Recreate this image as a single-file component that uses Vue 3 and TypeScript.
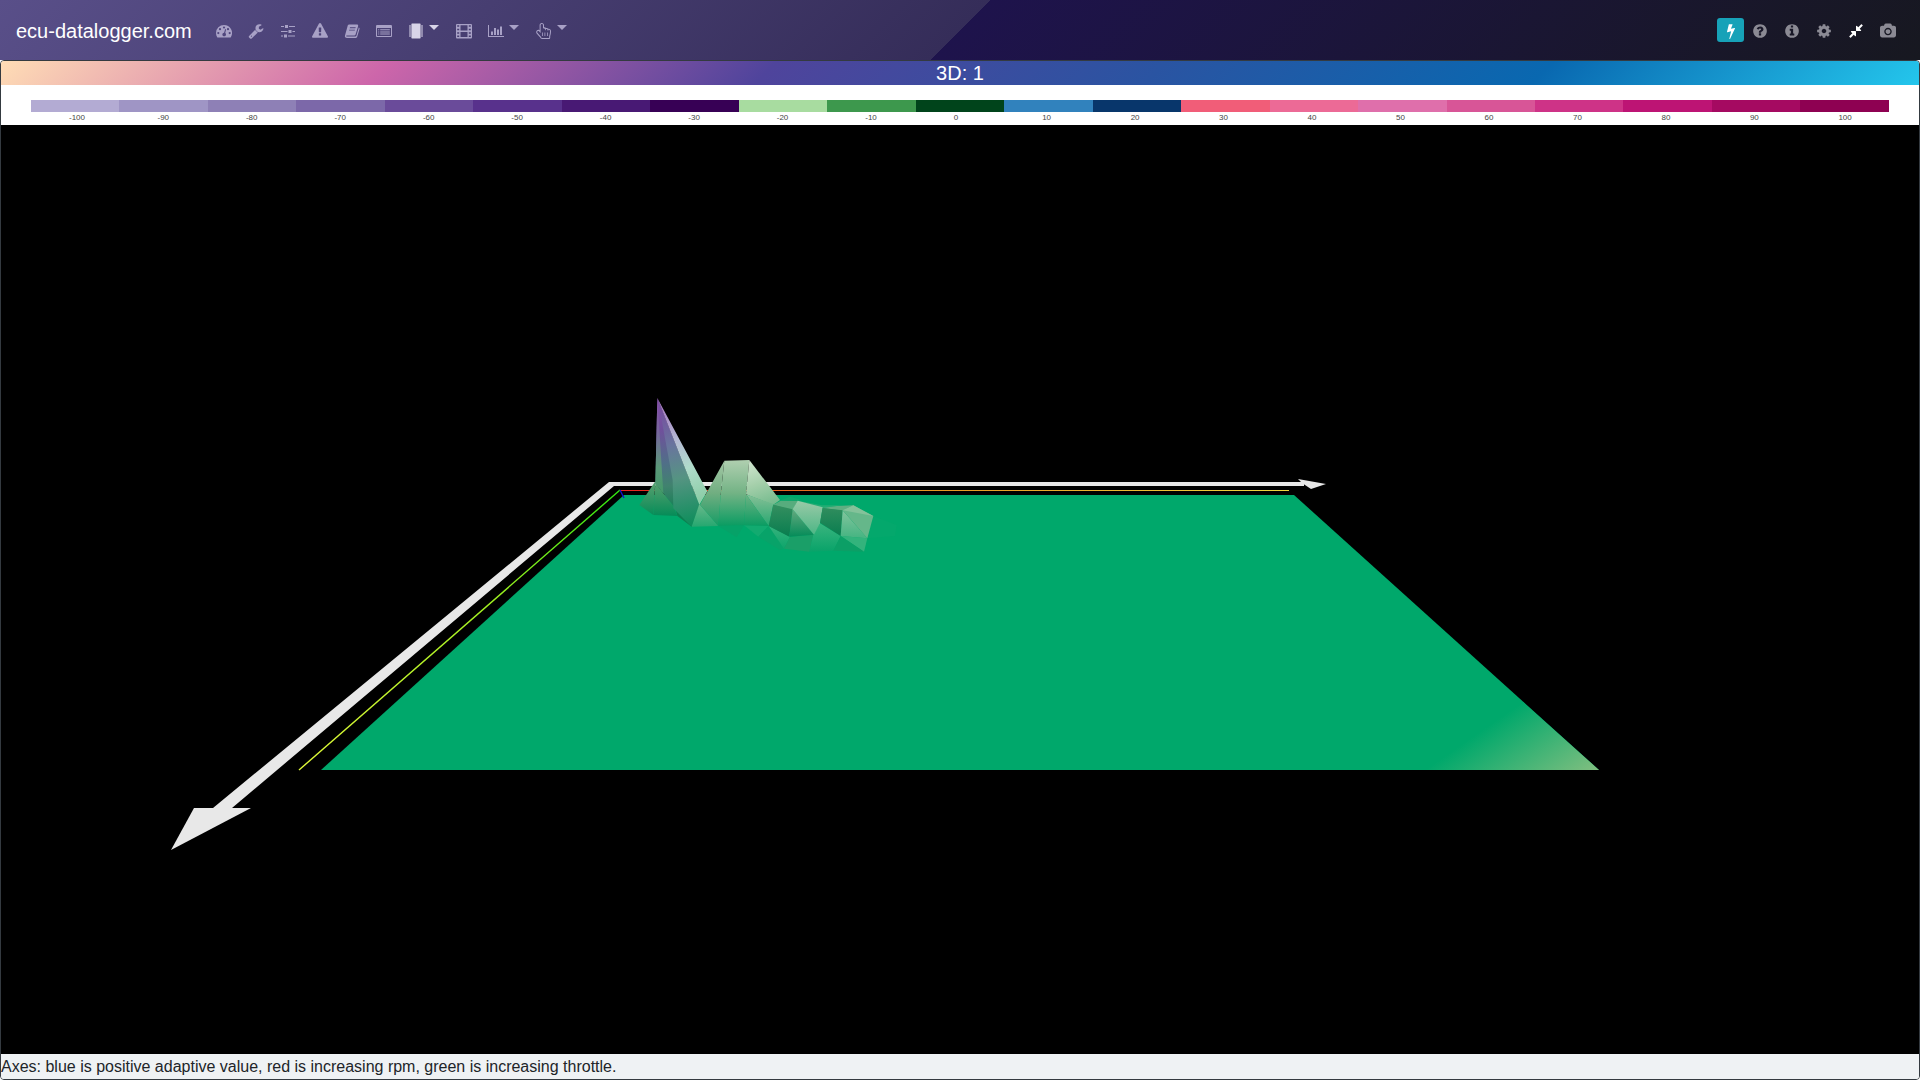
<script setup lang="ts">
interface Icon {
  label: string
  box?: string
  path: string
  caret?: boolean
  active?: boolean
}

const tools: Icon[] = [
  {
    label: 'Gauges',
    box: '0 0 16 16',
    path: 'M8 2a8 8 0 0 0-8 8c0 1.600.4 3 1.200 4.200.2.300.4.400.7.400h12.200c.3 0 .5-.1.7-.4A8 8 0 0 0 8 2zM2.300 9a1.100 1.100 0 1 1 0 2.200 1.100 1.100 0 0 1 0-2.200zM4 5.100a1.100 1.100 0 1 1 0 2.200 1.100 1.100 0 0 1 0-2.200zM8 3.400a1.100 1.100 0 1 1 0 2.200 1.100 1.100 0 0 1 0-2.200zM12 5.100a1.100 1.100 0 1 1 0 2.200 1.100 1.100 0 0 1 0-2.200zM13.700 9a1.100 1.100 0 1 1 0 2.200 1.100 1.100 0 0 1 0-2.200zM9.200 6.100l.9.300-.9 3.600a1.800 1.800 0 1 1-1.100-.3z'
  },
  {
    label: 'Service',
    path: 'M448 1472q0-26-19-45t-45-19-45 19-19 45 19 45 45 19 45-19 19-45zm644-420l-682 682q-37 37-90 37-52 0-91-37l-106-108q-38-36-38-90 0-53 38-91l681-681q39 98 114.500 173.500t173.500 114.500zm634-435q0 39-23 106-47 134-164.500 217.500t-258.500 83.500q-185 0-316.500-131.500t-131.500-316.500 131.500-316.500 316.500-131.500q58 0 121.500 16.500t107.500 46.500q16 11 16 28t-16 28l-293 169v224l193 107q5-3 79-48.500t135.500-81 70.500-35.500q15 0 23.500 10t8.500 25z'
  },
  {
    label: 'Parameters',
    box: '0 0 16 16',
    path: 'M1 3h3v1H1zM5 2h3v3H5zM9 3h6v1H9zM1 8h6.500v1H1zM8.500 7h3v3h-3zM12.500 8H15v1h-2.500zM1 12.500h2v1H1zM4 11.500h3v3H4zM8 12.500h7v1H8z'
  },
  {
    label: 'Fault codes',
    path: 'M1024 1375v-190q0-14-9.500-23.500t-22.500-9.500h-192q-13 0-22.500 9.500t-9.500 23.500v190q0 14 9.500 23.500t22.500 9.500h192q13 0 22.500-9.500t9.500-23.500zm-2-374l18-459q0-12-10-19-13-11-24-11h-220q-11 0-24 11-10 7-10 21l17 457q0 10 10 16.500t24 6.500h185q14 0 23.500-6.500t10.500-16.500zm-14-934l768 1408q35 63-2 126-17 29-46.500 46t-63.500 17h-1536q-34 0-63.500-17t-46.500-46q-37-63-2-126l768-1408q17-31 47-49t65-18 65 18 47 49z'
  },
  {
    label: 'Logbook',
    box: '0 0 16 16',
    path: 'M5.300 1.600h7.600c1 0 1.500.7 1.200 1.600l-2.500 8.300c-.2.700-.7 1-1.400 1H2.900c-.7 0-.8.700-.3.900.2.100.5.100.8.100h7.900c.5 0 .9-.2 1.100-.8l2.400-8.200c.7.400.9.900.7 1.600l-2.300 7.700c-.3.900-1 1.300-1.900 1.300H3.100c-1.700 0-2.600-1.300-2.100-2.600L3.600 3c.3-.8.8-1.400 1.700-1.400zM6 4.300l-.3.900h5.700l.3-.9zM5.300 6.700l-.3.900h5.700l.3-.9z'
  },
  {
    label: 'Records',
    box: '0 0 16 16',
    path: 'M1.300 2h13.400c.8 0 1.300.5 1.300 1.300v9.400c0 .8-.5 1.300-1.300 1.300H1.300C.5 14 0 13.500 0 12.700V3.300C0 2.500.5 2 1.300 2zM1 5v7.700l.3.300h13.400l.3-.3V5zM2.200 6.200h1v1h-1zM4.200 6.200h9.600v1H4.200zM2.200 8.400h1v1h-1zM4.200 8.400h9.600v1H4.200zM2.200 10.600h1v1h-1zM4.200 10.600h9.600v1H4.200z'
  },
  {
    label: 'Controller',
    box: '0 0 16 16',
    caret: true,
    active: true,
    path: 'M4 .6h8c.3 0 .6.300.6.600v13.600c0 .3-.3.600-.6.600H4c-.3 0-.6-.3-.6-.6V1.200c0-.3.300-.6.600-.6zM1 2.500h2v1H1zM1 4.500h2v1H1zM1 6.500h2v1H1zM1 8.500h2v1H1zM1 10.500h2v1H1zM1 12.500h2v1H1zM13 2.500h2v1h-2zM13 4.500h2v1h-2zM13 6.500h2v1h-2zM13 8.500h2v1h-2zM13 10.500h2v1h-2zM13 12.500h2v1h-2z'
  },
  {
    label: 'Playback',
    box: '0 0 16 16',
    path: 'M1.300 1h13.400c.8 0 1.300.5 1.300 1.300v11.900c0 .8-.5 1.300-1.300 1.300H1.300c-.8 0-1.300-.5-1.300-1.300V2.300C0 1.500.5 1 1.300 1zM1.200 2.300v1.500h2V2.300zM1.200 5.700v1.500h2V5.700zM1.200 9.200v1.500h2V9.200zM1.200 12.600v1.500h2v-1.500zM4.500 2.300v5.200h7V2.300zM4.500 8.900v5.200h7V8.900zM12.800 2.300v1.500h2V2.300zM12.800 5.700v1.500h2V5.700zM12.800 9.200v1.500h2V9.200zM12.800 12.600v1.500h2v-1.500z'
  },
  {
    label: 'Charts',
    box: '0 0 16 16',
    caret: true,
    path: 'M0 2h1v11h15v1H0zM3 8.500h2V12H3zM6 5h2v7H6zM9 6.500h2V12H9zM12 3.500h2V12h-2z'
  },
  {
    label: 'Touch',
    box: '0 0 16 16',
    caret: true,
    path: 'M5.800 0c1.300 0 2.200 1 2.200 2.200v2c1 0 1.600.1 2.200.8.900-.2 1.600.1 2.100.8 1.600-.2 2.700.8 2.700 2.300 0 1.900-.2 3.300-.8 4.800v1.500c0 .9-.6 1.600-1.500 1.600H6c-.8 0-1.400-.5-1.600-1.200L.6 10.400C-.7 8.500 1.300 6.200 3.200 7l.4.200v-5C3.600 1 4.500 0 5.800 0zm0 1c-.7 0-1.200.5-1.200 1.200v7.600h-.4L3 8.300c-.9-1.100-2.400.3-1.600 1.500l3.800 4.100c.1.600.3 1.100.8 1.100h6.700c.3 0 .5-.2.500-.6V13c.6-1.600.8-3 .8-4.900 0-1-.7-1.500-1.700-1.400v1h-.6c0-1.500-.8-2-1.900-1.700v1.300h-.6c0-1.300-.7-2.200-2.200-2.100v2.500H7v-5.500C7 1.500 6.500 1 5.800 1zM6 9.600h.8v3.500H6zM8.500 9.600h.8v3.500h-.8zM11 9.600h.8v3.500H11z'
  }
]

const actions: Icon[] = [
  {
    label: 'Help',
    path: 'M1024 1376v-192q0-14-9-23t-23-9h-192q-14 0-23 9t-9 23v192q0 14 9 23t23 9h192q14 0 23-9t9-23zm256-672q0-88-55.500-163t-138.500-116-170-41q-243 0-371 213-15 24 8 42l132 100q7 6 19 6 16 0 25-12 53-68 86-92 34-24 86-24 48 0 85.500 26t37.500 59q0 38-20 61t-68 45q-63 28-115.500 86.500t-52.500 125.500v36q0 14 9 23t23 9h192q14 0 23-9t9-23q0-19 21.500-49.500t54.500-49.500q32-18 49-28.500t46-35 44.500-48 28-60.500 12.500-81zm384 192q0 209-103 385.500t-279.500 279.500-385.500 103-385.500-103-279.500-279.500-103-385.500 103-385.500 279.500-279.500 385.500-103 385.500 103 279.500 279.500 103 385.500z'
  },
  {
    label: 'Information',
    path: 'M1152 1376v-160q0-14-9-23t-23-9h-96v-512q0-14-9-23t-23-9h-320q-14 0-23 9t-9 23v160q0 14 9 23t23 9h96v320h-96q-14 0-23 9t-9 23v160q0 14 9 23t23 9h448q14 0 23-9t9-23zm-128-896v-160q0-14-9-23t-23-9h-192q-14 0-23 9t-9 23v160q0 14 9 23t23 9h192q14 0 23-9t9-23zm640 416q0 209-103 385.500t-279.500 279.500-385.500 103-385.500-103-279.500-279.500-103-385.500 103-385.500 279.500-279.500 385.500-103 385.500 103 279.500 279.500 103 385.500z'
  },
  {
    label: 'Settings',
    path: 'M1152 896q0-106-75-181t-181-75-181 75-75 181 75 181 181 75 181-75 75-181zm512-109v222q0 12-8 23t-20 13l-185 28q-19 54-39 91 35 50 107 138 10 12 10 25t-9 23q-27 37-99 108t-94 71q-12 0-26-9l-138-108q-44 23-91 38-16 136-29 186-7 28-36 28h-222q-14 0-24.500-8.500t-11.500-21.500l-28-184q-49-16-90-37l-141 107q-10 9-25 9-14 0-25-11-126-114-165-168-7-10-7-23 0-12 8-23 15-21 51-66.500t54-70.500q-27-50-41-99l-183-27q-13-2-21-12.500t-8-23.500v-222q0-12 8-23t19-13l186-28q14-46 39-92-40-57-107-138-10-12-10-24 0-10 9-23 26-36 98.500-107.500t94.500-71.500q13 0 26 10l138 107q44-23 91-38 16-136 29-186 7-28 36-28h222q14 0 24.500 8.500t11.500 21.500l28 184q49 16 90 37l142-107q9-9 24-9 13 0 25 10 129 119 165 170 7 8 7 22 0 12-8 23-15 21-51 66.500t-54 70.500q26 50 41 98l183 28q13 2 21 12.500t8 23.500z'
  },
  {
    label: 'Exit full screen',
    active: true,
    path: 'M896 960v448q0 26-19 45t-45 19-45-19l-144-144-332 332q-10 10-23 10t-23-10l-114-114q-10-10-10-23t10-23l332-332-144-144q-19-19-19-45t19-45 45-19h448q26 0 45 19t19 45zm755-672q0 13-10 23l-332 332 144 144q19 19 19 45t-19 45-45 19h-448q-26 0-45-19t-19-45v-448q0-26 19-45t45-19 45 19l144 144 332-332q10-10 23-10t23 10l114 114q10 10 10 23z'
  },
  {
    label: 'Screenshot',
    box: '0 0 1920 1792',
    path: 'M960 672q119 0 203.500 84.500t84.500 203.500-84.500 203.500-203.500 84.500-203.500-84.500-84.500-203.500 84.500-203.500 203.500-84.500zm704-416q106 0 181 75t75 181v896q0 106-75 181t-181 75h-1408q-106 0-181-75t-75-181v-896q0-106 75-181t181-75h224l51-136q19-49 69.500-84.500t103.500-35.500h512q53 0 103.500 35.500t69.500 84.500l51 136h224zm-704 1152q185 0 316.500-131.500t131.500-316.500-131.500-316.500-316.500-131.500-316.500 131.500-131.500 316.500 131.500 316.500 316.500 131.500z'
  }
]

const bolt =
  'M1333 566q18 20 7 44l-540 1157q-13 25-42 25-4 0-14-2-17-5-25.500-19t-4.500-30l197-808-406 101q-4 1-12 1-18 0-31-11-18-15-13-39l201-825q4-14 16-23t28-9h328q19 0 32 12.500t13 29.500q0 8-5 18l-171 463 396-98q8-2 12-2 19 0 34 15z'

const colors = [
  '#b3abd3', '#9f95c5', '#8e80b6', '#7c68a9', '#6a4b9a', '#58318c', '#481974',
  '#370055', '#a8dca0', '#3d984d', '#00441b', '#3182bd', '#08366b', '#f15d78',
  '#ec6a96', '#df6fab', '#d85597', '#ce3387', '#bd1474', '#a50a61', '#8e0152'
]
const scale = colors.map((color, i) => ({ color, value: (i - 10) * 10 }))
</script>

<template>
  <div class="app">
    <nav class="navbar">
      <a class="brand" href="#">ecu-datalogger.com</a>
      <div class="group">
        <button
          v-for="t in tools"
          :key="t.label"
          type="button"
          class="tool"
          :class="{ dropdown: t.caret, lit: t.active }"
          :aria-label="t.label"
        >
          <svg class="icon" :viewBox="t.box ?? '0 0 1792 1792'">
            <path :d="t.path" fill-rule="evenodd" />
          </svg>
          <span v-if="t.caret" class="caret"></span>
        </button>
      </div>
      <div class="group right">
        <button type="button" class="connect" aria-label="Connect">
          <svg class="icon" viewBox="0 0 1792 1792"><path :d="bolt" /></svg>
        </button>
        <button
          v-for="a in actions"
          :key="a.label"
          type="button"
          class="tool action"
          :class="{ bright: a.active }"
          :aria-label="a.label"
        >
          <svg class="icon" :viewBox="a.box ?? '0 0 1792 1792'">
            <path :d="a.path" fill-rule="evenodd" />
          </svg>
        </button>
      </div>
    </nav>

    <main class="card">
      <h1 class="title">3D: 1</h1>
      <ul class="legend">
        <li v-for="s in scale" :key="s.value">
          <span class="swatch" :style="{ background: s.color }"></span>
          <span class="value">{{ s.value }}</span>
        </li>
      </ul>

      <svg class="scene" viewBox="1 125 1918 929" role="img" aria-label="Adaptive value surface">
        <defs>
          <linearGradient id="throttle" gradientUnits="userSpaceOnUse" x1="620" y1="490" x2="299" y2="770">
            <stop offset="0" stop-color="#30e810" />
            <stop offset="0.400" stop-color="#a0f020" />
            <stop offset="1" stop-color="#e0f838" />
          </linearGradient>
          <linearGradient id="rpm" gradientUnits="userSpaceOnUse" x1="620" y1="490" x2="1289" y2="490">
            <stop offset="0" stop-color="#e82020" />
            <stop offset="0.400" stop-color="#e89020" />
            <stop offset="1" stop-color="#f0d840" />
          </linearGradient>
          <linearGradient id="corner" gradientUnits="userSpaceOnUse" x1="1425" y1="770" x2="1482" y2="852">
            <stop offset="0" stop-color="#00a86b" />
            <stop offset="1" stop-color="#82bf80" />
          </linearGradient>
          <linearGradient id="spike" gradientUnits="userSpaceOnUse" x1="112" y1="60" x2="150" y2="405">
            <stop offset="0" stop-color="#8350a8" />
            <stop offset="0.260" stop-color="#70509c" />
            <stop offset="0.550" stop-color="#506f88" />
            <stop offset="0.750" stop-color="#40836e" />
            <stop offset="1" stop-color="#0c7f50" />
          </linearGradient>
          <linearGradient id="spikeLeft" gradientUnits="userSpaceOnUse" x1="112" y1="60" x2="112" y2="350">
            <stop offset="0" stop-color="#8650a6" />
            <stop offset="0.350" stop-color="#75689b" />
            <stop offset="0.700" stop-color="#5a9878" />
            <stop offset="1" stop-color="#409968" />
          </linearGradient>
          <linearGradient id="spikeMid" gradientUnits="userSpaceOnUse" x1="140" y1="90" x2="215" y2="430">
            <stop offset="0" stop-color="#75509f" />
            <stop offset="0.300" stop-color="#69749e" />
            <stop offset="0.600" stop-color="#559482" />
            <stop offset="1" stop-color="#0f8e5c" />
          </linearGradient>
          <linearGradient id="spikeLight" gradientUnits="userSpaceOnUse" x1="130" y1="80" x2="250" y2="360">
            <stop offset="0" stop-color="#a77fc4" />
            <stop offset="0.350" stop-color="#b5b9d4" />
            <stop offset="0.650" stop-color="#b0dccb" />
            <stop offset="1" stop-color="#8bcda6" />
          </linearGradient>
          <linearGradient id="foot" gradientUnits="userSpaceOnUse" x1="0" y1="320" x2="0" y2="408">
            <stop offset="0" stop-color="#4f9d6c" />
            <stop offset="1" stop-color="#058c58" />
          </linearGradient>
          <linearGradient id="hill" gradientUnits="userSpaceOnUse" x1="0" y1="240" x2="0" y2="438">
            <stop offset="0" stop-color="#b0cfb0" />
            <stop offset="0.500" stop-color="#73b385" />
            <stop offset="1" stop-color="#0a9c62" />
          </linearGradient>
          <linearGradient id="hillSide" gradientUnits="userSpaceOnUse" x1="0" y1="240" x2="0" y2="438">
            <stop offset="0" stop-color="#a5c8a6" />
            <stop offset="0.500" stop-color="#71ae81" />
            <stop offset="1" stop-color="#159c65" />
          </linearGradient>
          <linearGradient id="hillLight" gradientUnits="userSpaceOnUse" x1="390" y1="240" x2="440" y2="385">
            <stop offset="0" stop-color="#d2e6d0" />
            <stop offset="0.500" stop-color="#a4cfaa" />
            <stop offset="1" stop-color="#70b98b" />
          </linearGradient>
          <linearGradient id="slope" gradientUnits="userSpaceOnUse" x1="0" y1="350" x2="0" y2="450">
            <stop offset="0" stop-color="#80be94" />
            <stop offset="1" stop-color="#1ba56c" />
          </linearGradient>
          <linearGradient id="rockDark" gradientUnits="userSpaceOnUse" x1="0" y1="375" x2="0" y2="470">
            <stop offset="0" stop-color="#348f5f" />
            <stop offset="1" stop-color="#087d4f" />
          </linearGradient>
          <linearGradient id="rockMid" gradientUnits="userSpaceOnUse" x1="0" y1="385" x2="0" y2="470">
            <stop offset="0" stop-color="#68aa80" />
            <stop offset="1" stop-color="#058c59" />
          </linearGradient>
          <linearGradient id="rockLight" gradientUnits="userSpaceOnUse" x1="0" y1="360" x2="0" y2="470">
            <stop offset="0" stop-color="#9bcaa8" />
            <stop offset="1" stop-color="#48b583" />
          </linearGradient>
          <linearGradient id="fade" gradientUnits="userSpaceOnUse" x1="0" y1="430" x2="0" y2="520">
            <stop offset="0" stop-color="#3ab47e" />
            <stop offset="1" stop-color="#06a268" />
          </linearGradient>
        </defs>

        <!-- ground plane -->
        <path d="M624 495H1294L1599 770H321z" fill="#00a86b" />
        <path d="M1425 770L1523 702L1599 770z" fill="url(#corner)" />

        <!-- axes -->
        <path d="M609 482H1304V486H614L232 808H213z" fill="#e8e8e8" />
        <path d="M1298 479L1326 484L1311 489L1302 483z" fill="#e8e8e8" />
        <path d="M194 808H251L171 850z" fill="#e8e8e8" />
        <path d="M620 490L299 770" stroke="url(#throttle)" stroke-width="1.400" fill="none" />
        <path d="M620 490H1289V491H620z" fill="url(#rpm)" />
        <path d="M620 490L624 498" stroke="#1010d0" stroke-width="1.400" fill="none" />

        <!-- adaptive value peaks -->
        <svg x="620" y="380" width="300" height="190" viewBox="0 0 900 570">
          <path d="M295 438L350 472L372 436z" fill="#06a268" />
          <path d="M372 436L415 470L446 438z" fill="#12ab70" />
          <path d="M415 470L446 438L495 505L480 510z" fill="#08a369" />
          <path d="M446 438L510 470L492 506z" fill="url(#fade)" />
          <path d="M510 470L580 464L568 515L492 506z" fill="#1a9f68" />
          <path d="M580 464L600 430L662 468L640 512L568 515z" fill="url(#fade)" />
          <path d="M662 468L742 475L732 515z" fill="#33b37c" />
          <path d="M662 468L732 515L640 512z" fill="#0c9f66" />
          <path d="M760 408L830 435L825 468L742 475z" fill="#04a86c" />

          <path d="M106 304L58 375L100 405z" fill="url(#foot)" />
          <path d="M106 308L100 405L172 408L160 378z" fill="url(#foot)" />
          <path d="M112 54L106 310L165 384L172 408L215 440L238 374z" fill="url(#spike)" />
          <path d="M112 54L106 310L130 340z" fill="url(#spikeLeft)" />
          <path d="M114 60L238 374L215 440L160 385L158 300z" fill="url(#spikeMid)" />
          <path d="M112 54L252 316L262 334L238 374z" fill="url(#spikeLight)" />
          <path d="M238 372L215 440L295 438z" fill="url(#slope)" />

          <path d="M313 242L240 374L295 438L302 345z" fill="url(#hillSide)" />
          <path d="M313 242L388 240L378 345L372 436L295 438L302 345z" fill="url(#hill)" />
          <path d="M388 240L480 360L460 374L378 343z" fill="url(#hillLight)" />
          <path d="M378 343L460 372L446 438z" fill="url(#slope)" />
          <path d="M378 343L446 438L372 436z" fill="url(#hill)" />

          <path d="M460 374L482 362L533 362L518 392z" fill="#57ac7d" />
          <path d="M484 360L510 350L545 360L533 363z" fill="#10a66c" />
          <path d="M533 362L606 376L665 376L606 384z" fill="#22ad74" />
          <path d="M460 374L518 388L508 470L446 438z" fill="url(#rockDark)" />
          <path d="M518 388L508 470L582 464z" fill="url(#rockMid)" />
          <path d="M533 362L608 382L600 430L582 464L518 388z" fill="url(#rockLight)" />
          <path d="M606 384L650 378L700 376L668 392z" fill="#60ae82" />
          <path d="M608 384L668 391L662 468L600 428z" fill="url(#rockDark)" />
          <path d="M668 391L662 468L742 475z" fill="url(#rockLight)" />
          <path d="M668 391L700 376L760 408L742 475z" fill="#65b78a" />
          <path d="M700 376L760 408L668 391z" fill="#84c29a" />
        </svg>
      </svg>

      <footer class="note">
        Axes: blue is positive adaptive value, red is increasing rpm, green is increasing throttle.
      </footer>
    </main>
  </div>
</template>

<style>
body {
  margin: 0;
  background: #fff;
}
</style>

<style scoped>
.app {
  display: flex;
  flex-direction: column;
  min-height: 100vh;
  font-family: "Liberation Sans", Arial, sans-serif;
  font-size: 16px;
  line-height: 24px;
  color: #212529;
}

.navbar {
  display: flex;
  align-items: center;
  height: 60px;
  box-sizing: border-box;
  padding: 2px 16px 0;
  background: linear-gradient(135deg, #594f89 0%, #352d59 50%, #1e134c 50%, #171820 100%);
}

.brand {
  margin-right: 16px;
  font-size: 20px;
  line-height: 30px;
  color: #fff;
  text-decoration: none;
  white-space: nowrap;
}

.group {
  display: flex;
  align-items: center;
}

.right {
  margin-left: auto;
}

button {
  display: flex;
  align-items: center;
  box-sizing: border-box;
  margin: 0;
  padding: 0;
  border: 0;
  background: none;
  color: inherit;
}

.tool {
  width: 32px;
  height: 40px;
  padding: 0 8px;
  color: #a8a1c6;
}

.dropdown {
  width: 48px;
  gap: 5px;
}

.lit {
  color: #d8d4e8;
}

.action {
  color: #8b8a94;
}

.bright {
  color: #fff;
}

.icon {
  flex: none;
  width: 16px;
  height: 16px;
  fill: currentColor;
}

.caret {
  flex: none;
  margin-bottom: 7px;
  border: 5px solid transparent;
  border-top-color: currentColor;
  border-bottom: 0;
}

.connect {
  justify-content: center;
  width: 27px;
  height: 24px;
  margin-bottom: 2px;
  padding-top: 2px;
  border-radius: 3px;
  background: #17a2b8;
  color: #fff;
}

.card {
  display: flex;
  flex: 1;
  flex-direction: column;
  border: 1px solid #343a40;
  border-radius: 4px;
  overflow: hidden;
}

.title {
  margin: 0;
  font-size: 20px;
  font-weight: 400;
  line-height: 24px;
  text-align: center;
  color: #fff;
  background: linear-gradient(135deg, #ffddb5 0%, #cd66aa 20%, #4f449c 40%, #2a54a2 60%, #0968b0 80%, #24c6ec 100%);
}

.legend {
  display: flex;
  margin: 0;
  padding: 15px 30px 1px;
  list-style: none;
  background: #fff;
}

.legend li {
  display: flex;
  flex: 1;
  flex-direction: column;
}

.swatch {
  height: 12px;
}

.value {
  padding-left: 38px;
  font-size: 8px;
  line-height: 12px;
  color: #444;
}

.scene {
  display: block;
  flex: 1;
  width: 100%;
  min-height: 0;
  background: #000;
}

.note {
  height: 25px;
  line-height: 26px;
  background: #eff2f4;
  white-space: nowrap;
}
</style>
